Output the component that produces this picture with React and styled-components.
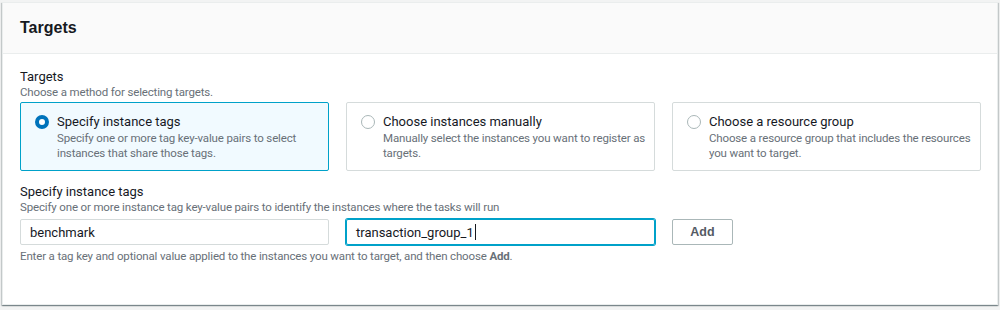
import styled, { createGlobalStyle } from "styled-components";

const GlobalStyle = createGlobalStyle`
  html, body {
    margin: 0;
    padding: 0;
    background: #f2f3f3;
  }
  body {
    font-family: Roboto, "Noto Sans", Arial, sans-serif;
    color: #16191f;
  }
`;

const Page = styled.div`
  padding: 2px 2px 5px 2px;
  width: 1000px;
  height: 310px;
  box-sizing: border-box;
`;

const Panel = styled.div`
  background: #fff;
  border: 1px solid #eaeded;
  box-shadow: 0 1px 1px 0 rgba(0, 28, 36, 0.3), 1px 1px 1px 0 rgba(0, 28, 36, 0.15), -1px 1px 1px 0 rgba(0, 28, 36, 0.15);
  height: 100%;
  box-sizing: border-box;
`;

const PanelHeader = styled.div`
  background: #fafafa;
  border-bottom: 1px solid #eaeded;
  height: 50px;
  padding: 0 17px;
  display: flex;
  align-items: center;
`;

const PanelTitle = styled.h2`
  margin: 0;
  font-family: "Liberation Sans", Arial, sans-serif;
  font-size: 16px;
  font-weight: 700;
  color: #16191f;
`;

const PanelBody = styled.div`
  padding: 14px 17px;
`;

const Field = styled.div`
  display: flex;
  flex-direction: column;
  margin-bottom: ${({ gap }) => gap || 0}px;
`;

const Label = styled.div`
  font-size: 13px;
  line-height: 17px;
  color: #16191f;
`;

const Description = styled.div`
  font-size: 11.5px;
  line-height: 15px;
  letter-spacing: -0.15px;
  color: #687078;
`;

const Tiles = styled.div`
  display: grid;
  grid-template-columns: repeat(3, 309px);
  column-gap: 17px;
  margin-top: 2px;
`;

const Tile = styled.label`
  display: flex;
  gap: 8px;
  height: 69px;
  box-sizing: border-box;
  padding: 9px 6px 9px 14px;
  border: 1px solid ${({ selected }) => (selected ? "#00a1c9" : "#d5dbdb")};
  background: ${({ selected }) => (selected ? "#f1faff" : "#fff")};
  border-radius: 2px;
  cursor: pointer;
`;

const Radio = styled.span`
  flex: none;
  width: 14px;
  height: 14px;
  margin-top: 3px;
  border-radius: 50%;
  box-sizing: border-box;
  border: ${({ checked }) => (checked ? "4px solid #0073bb" : "1px solid #aab7b8")};
  background: #fff;
`;

const TileText = styled.div`
  display: flex;
  flex-direction: column;
  min-width: 0;
`;

const TileTitle = styled.div`
  font-size: 13px;
  line-height: 19px;
`;

const TileDesc = styled.div`
  font-size: 11.5px;
  line-height: 15px;
  letter-spacing: -0.15px;
  color: #687078;
`;

const InputRow = styled.div`
  display: grid;
  grid-template-columns: 309px 309px auto;
  column-gap: 17px;
  align-items: start;
  margin-top: 4px;
`;

const Input = styled.div`
  height: 26px;
  box-sizing: border-box;
  border: 1px solid ${({ focused }) => (focused ? "#00a1c9" : "#d5dbdb")};
  box-shadow: ${({ focused }) => (focused ? "0 0 0 1px #00a1c9" : "none")};
  border-radius: 2px;
  padding: 0 9px;
  display: flex;
  align-items: center;
  font-size: 13px;
  color: #16191f;
`;

const Caret = styled.span`
  display: inline-block;
  width: 1px;
  height: 16px;
  background: #16191f;
  margin-left: 1px;
`;

const Button = styled.button`
  justify-self: start;
  width: 61px;
  height: 26px;
  background: #fff;
  border: 1px solid #aab7b8;
  border-radius: 2px;
  font-family: "Liberation Sans", Arial, sans-serif;
  font-size: 12.5px;
  font-weight: 700;
  color: #545b64;
  padding: 0;
`;

const Help = styled.div`
  font-size: 11.5px;
  line-height: 16px;
  letter-spacing: -0.15px;
  color: #687078;
  margin-top: 3px;

  b {
    font-weight: 700;
  }
`;

const options = [
  {
    title: "Specify instance tags",
    desc: "Specify one or more tag key-value pairs to select instances that share those tags.",
    selected: true,
  },
  {
    title: "Choose instances manually",
    desc: "Manually select the instances you want to register as targets.",
  },
  {
    title: "Choose a resource group",
    desc: "Choose a resource group that includes the resources you want to target.",
  },
];

export default function App() {
  return (
    <>
      <GlobalStyle />
      <Page>
        <Panel>
          <PanelHeader>
            <PanelTitle>Targets</PanelTitle>
          </PanelHeader>
          <PanelBody>
            <Field gap={12}>
              <Label>Targets</Label>
              <Description>Choose a method for selecting targets.</Description>
              <Tiles>
                {options.map((o) => (
                  <Tile key={o.title} selected={o.selected}>
                    <Radio checked={o.selected} />
                    <TileText>
                      <TileTitle>{o.title}</TileTitle>
                      <TileDesc>{o.desc}</TileDesc>
                    </TileText>
                  </Tile>
                ))}
              </Tiles>
            </Field>
            <Field>
              <Label>Specify instance tags</Label>
              <Description>
                Specify one or more instance tag key-value pairs to identify the instances where the tasks will run
              </Description>
              <InputRow>
                <Input>benchmark</Input>
                <Input focused>
                  transaction_group_1
                  <Caret />
                </Input>
                <Button>Add</Button>
              </InputRow>
              <Help>
                Enter a tag key and optional value applied to the instances you want to target, and then choose <b>Add</b>.
              </Help>
            </Field>
          </PanelBody>
        </Panel>
      </Page>
    </>
  );
}
